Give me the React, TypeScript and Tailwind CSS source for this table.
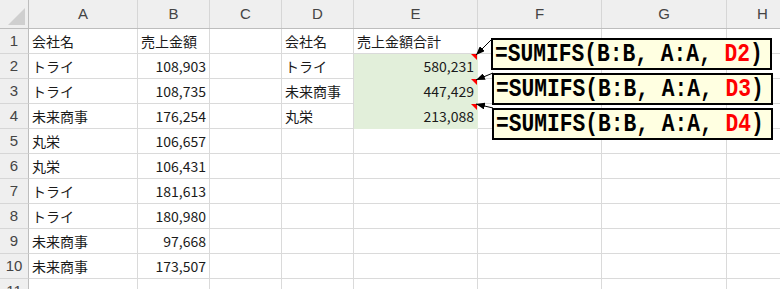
const cols = ['A', 'B', 'C', 'D', 'E', 'F', 'G', 'H'];
const widths = ['w-[109px]', 'w-[72px]', 'w-[72px]', 'w-[72px]', 'w-[124px]', 'w-[124px]', 'w-[125px]', 'w-[72px]'];

type Cell = { text?: string; num?: boolean; fill?: boolean; mark?: boolean };

const left: [string, string][] = [
  ['会社名', '売上金額'],
  ['トライ', '108,903'],
  ['トライ', '108,735'],
  ['未来商事', '176,254'],
  ['丸栄', '106,657'],
  ['丸栄', '106,431'],
  ['トライ', '181,613'],
  ['トライ', '180,980'],
  ['未来商事', '97,668'],
  ['未来商事', '173,507'],
  ['', ''],
];

const right: [string, string][] = [
  ['会社名', '売上金額合計'],
  ['トライ', '580,231'],
  ['未来商事', '447,429'],
  ['丸栄', '213,088'],
];

function buildRow(i: number): Cell[] {
  const [a, b] = left[i];
  const r = right[i];
  const cells: Cell[] = [
    { text: a },
    { text: b, num: i > 0 },
    {},
    { text: r ? r[0] : '' },
    { text: r ? r[1] : '', num: i > 0, fill: i > 0 && !!r, mark: i > 0 && !!r },
    {},
    {},
    {},
  ];
  return cells;
}

function Comment({ cell, top, leftPx }: { cell: string; top: string; leftPx: string }) {
  return (
    <div
      className={`absolute ${top} ${leftPx} w-[281px] h-[32px] border-2 border-black bg-[#ffffe1] flex items-center overflow-hidden`}
    >
      <span className="ml-[2px] origin-left scale-x-[0.85] whitespace-pre font-bold text-[25px] leading-none text-black font-['Liberation_Mono',monospace]">
        =SUMIFS(B:B, A:A, <span className="text-[#ff0000]">{cell}</span>)
      </span>
    </div>
  );
}

export default function App() {
  return (
    <div className="relative w-[780px] h-[289px] overflow-hidden bg-white font-['Noto_Sans_CJK_JP',sans-serif] text-[14px] text-[#1a1a1a]">
      {/* column header */}
      <div className="flex h-[29px] bg-[#efefef] border-b border-[#bdbdbd]">
        <div className="relative w-[29px] shrink-0 border-r border-[#bdbdbd]">
          <div className="absolute left-[8px] top-[8px] w-0 h-0 border-l-[17px] border-l-transparent border-b-[17px] border-b-[#cfcfcf]" />
        </div>
        {cols.map((c, i) => (
          <div
            key={c}
            className={`${widths[i]} shrink-0 border-r border-[#d6d6d6] flex items-center justify-center text-[15px] text-[#444] font-['Liberation_Sans',sans-serif]`}
          >
            {c}
          </div>
        ))}
      </div>

      {left.map((_, ri) => (
        <div key={ri} className="flex h-[25px]">
          <div className="w-[29px] shrink-0 bg-[#efefef] border-r border-b border-r-[#bdbdbd] border-b-[#d6d6d6] flex items-center justify-center text-[15px] text-[#444] font-['Liberation_Sans',sans-serif]">
            {ri + 1}
          </div>
          {buildRow(ri).map((cell, ci) => (
            <div
              key={ci}
              className={`relative ${widths[ci]} shrink-0 flex items-center px-[3px] whitespace-nowrap border-r border-b ${
                cell.fill ? 'bg-[#e2efda] border-b-[#e2efda] border-r-[#e2efda]' : 'border-[#dadada]'
              } ${ri === 3 && ci === 4 ? 'border-b-[#dadada]' : ''} ${cell.num ? 'justify-end' : 'justify-start'}`}
            >
              {cell.text}
              {cell.mark && (
                <div className="absolute right-0 top-0 w-0 h-0 border-l-[6px] border-l-transparent border-t-[6px] border-t-[#ff0000]" />
              )}
            </div>
          ))}
        </div>
      ))}

      <svg className="absolute inset-0 pointer-events-none" width={780} height={289}>
        <defs>
          <marker id="ah" markerWidth="9" markerHeight="7" refX="9" refY="3.5" orient="auto" markerUnits="userSpaceOnUse">
            <path d="M0,0 L9,3.5 L0,7 z" fill="#000" />
          </marker>
        </defs>
        <line x1="492" y1="39" x2="476" y2="55" stroke="#000" strokeWidth="1" markerEnd="url(#ah)" />
        <line x1="493" y1="73" x2="476" y2="80" stroke="#000" strokeWidth="1" markerEnd="url(#ah)" />
        <line x1="493" y1="108" x2="476" y2="104" stroke="#000" strokeWidth="1" markerEnd="url(#ah)" />
      </svg>

      <Comment cell="D2" top="top-[38px]" leftPx="left-[491px]" />
      <Comment cell="D3" top="top-[73px]" leftPx="left-[492px]" />
      <Comment cell="D4" top="top-[108px]" leftPx="left-[492px]" />
    </div>
  );
}
